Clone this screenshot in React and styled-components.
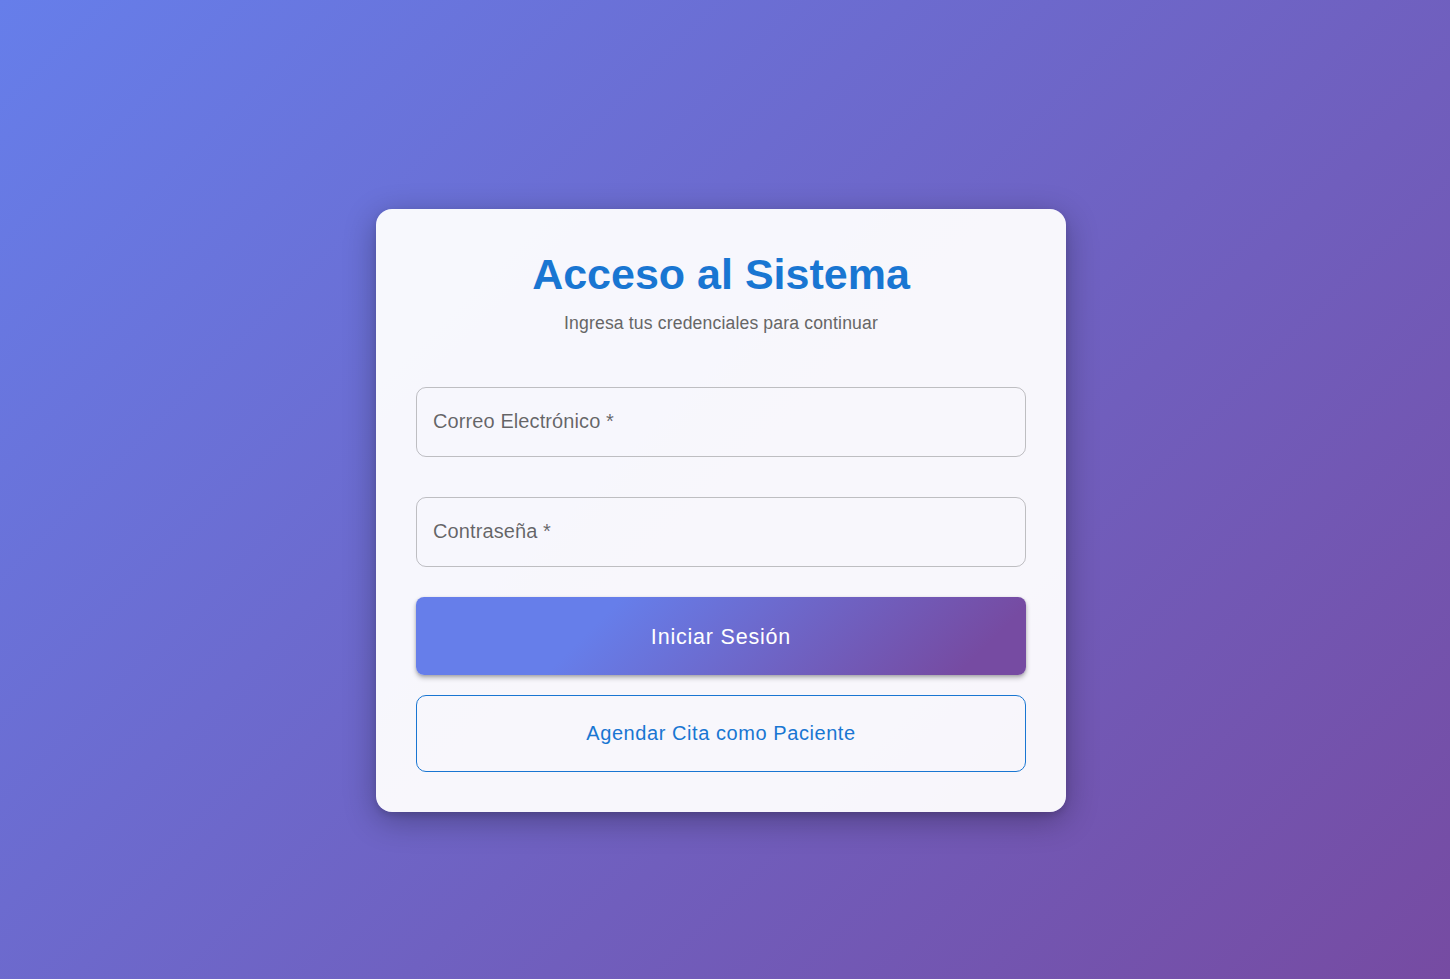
import React from "react";
import styled, { createGlobalStyle } from "styled-components";

const GlobalStyle = createGlobalStyle`
  html, body { margin: 0; padding: 0; }
  body {
    font-family: "Liberation Sans", Arial, sans-serif;
    background: linear-gradient(135deg, #667eea 0%, #764ba2 100%);
    min-height: 100vh;
  }
  * { box-sizing: border-box; }
`;

const Page = styled.div`
  min-height: 100vh;
  display: flex;
  align-items: center;
  justify-content: center;
  padding: 42px 8px 0 0;
  background: linear-gradient(135deg, #667eea 0%, #764ba2 100%);
`;

const Card = styled.div`
  width: 690px;
  padding: 40px;
  border-radius: 16px;
  background: rgba(255, 255, 255, 0.95);
  box-shadow: 0 8px 32px rgba(0, 0, 0, 0.3), 0 3px 6px rgba(0, 0, 0, 0.12);
  display: flex;
  flex-direction: column;
`;

const Title = styled.h1`
  margin: 0;
  font-size: 43px;
  line-height: 1.2;
  font-weight: 700;
  color: #1976d2;
  text-align: center;
`;

const Subtitle = styled.p`
  margin: 9px 0 51px;
  font-size: 17.6px;
  line-height: 1.5;
  letter-spacing: 0.15px;
  color: #666666;
  text-align: center;
`;

const Field = styled.div`
  height: 70px;
  border: 1px solid rgba(0, 0, 0, 0.23);
  border-radius: 10px;
  display: flex;
  align-items: center;
  padding: 0 16px;
  margin-bottom: ${(p) => p.$gap}px;
`;

const Label = styled.span`
  font-size: 20px;
  letter-spacing: 0.1px;
  color: rgba(0, 0, 0, 0.6);
`;

const PrimaryButton = styled.button`
  height: 78px;
  width: 100%;
  border: none;
  border-radius: 8px;
  padding: 3px 0 0;
  background: linear-gradient(135deg, #667eea 30%, #764ba2 90%);
  box-shadow: 0 3px 5px rgba(0, 0, 0, 0.25), 0 1px 3px rgba(0, 0, 0, 0.15);
  color: #ffffff;
  font-family: "Liberation Sans", Arial, sans-serif;
  font-size: 21.5px;
  letter-spacing: 0.8px;
  margin-bottom: 20px;
  cursor: pointer;
`;

const OutlineButton = styled.button`
  height: 77px;
  width: 100%;
  border: 1px solid #1976d2;
  border-radius: 10px;
  background: transparent;
  color: #1976d2;
  font-family: "Liberation Sans", Arial, sans-serif;
  font-size: 20px;
  letter-spacing: 0.57px;
  cursor: pointer;
`;

export default function App() {
  return (
    <>
      <GlobalStyle />
      <Page>
        <Card>
          <Title>Acceso al Sistema</Title>
          <Subtitle>Ingresa tus credenciales para continuar</Subtitle>
          <Field $gap={40}>
            <Label>Correo Electrónico *</Label>
          </Field>
          <Field $gap={30}>
            <Label>Contraseña *</Label>
          </Field>
          <PrimaryButton>Iniciar Sesión</PrimaryButton>
          <OutlineButton>Agendar Cita como Paciente</OutlineButton>
        </Card>
      </Page>
    </>
  );
}
